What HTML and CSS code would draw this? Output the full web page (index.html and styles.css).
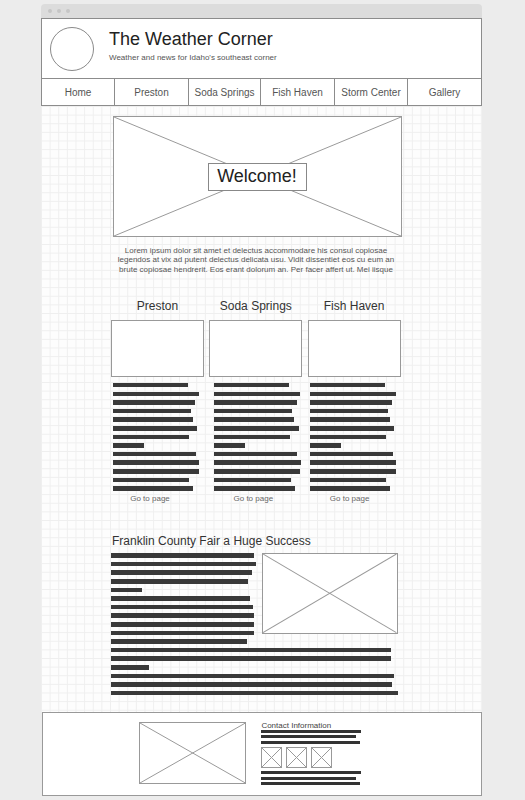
FILE: index.html
```html
<!DOCTYPE html>
<html lang="en">
<head>
<meta charset="utf-8">
<title>The Weather Corner</title>
<link rel="stylesheet" href="styles.css">
</head>
<body>
<div class="frame">
  <div class="titlebar"><span class="dot"></span><span class="dot"></span><span class="dot"></span></div>
  <header class="header">
    <div class="logo"></div>
    <div class="brand">
      <h1 class="title">The Weather Corner</h1>
      <p class="tagline">Weather and news for Idaho's southeast corner</p>
    </div>
  </header>
  <nav class="nav">
    <a href="#">Home</a>
    <a href="#">Preston</a>
    <a href="#">Soda Springs</a>
    <a href="#">Fish Haven</a>
    <a href="#">Storm Center</a>
    <a href="#">Gallery</a>
  </nav>
  <main class="canvas">
    <div class="hero">
      <svg class="hero-x" viewBox="0 0 100 100" preserveAspectRatio="none"><line x1="0" y1="0" x2="100" y2="100"/><line x1="100" y1="0" x2="0" y2="100"/></svg>
      <div class="welcome">Welcome!</div>
    </div>
    <p class="intro">Lorem ipsum dolor sit amet et delectus accommodare his consul copiosae<br>legendos at vix ad putent delectus delicata usu. Vidit dissentiet eos cu eum an<br>brute copiosae hendrerit. Eos erant dolorum an. Per facer affert ut. Mei iisque</p>

    <section class="cities">
      <div class="city">
        <h2 class="city-name">Preston</h2>
        <div class="city-box"></div>
        <div class="bars bars-c1">
          <div class="bar" style="width:75px"></div><div class="bar" style="width:86px"></div><div class="bar" style="width:82.5px"></div><div class="bar" style="width:78px"></div><div class="bar" style="width:80px"></div><div class="bar" style="width:84.5px"></div><div class="bar" style="width:76px"></div><div class="bar" style="width:31px"></div><div class="bar" style="width:83px"></div><div class="bar" style="width:86.3px"></div><div class="bar" style="width:86px"></div><div class="bar" style="width:76.5px"></div><div class="bar" style="width:80.5px"></div>
        </div>
        <a class="go go-c1" href="#">Go to page</a>
      </div>
      <div class="city">
        <h2 class="city-name">Soda Springs</h2>
        <div class="city-box"></div>
        <div class="bars bars-c2">
          <div class="bar" style="width:75px"></div><div class="bar" style="width:86px"></div><div class="bar" style="width:82.5px"></div><div class="bar" style="width:78px"></div><div class="bar" style="width:80px"></div><div class="bar" style="width:84.5px"></div><div class="bar" style="width:76px"></div><div class="bar" style="width:31px"></div><div class="bar" style="width:83px"></div><div class="bar" style="width:86.3px"></div><div class="bar" style="width:86px"></div><div class="bar" style="width:76.5px"></div><div class="bar" style="width:80.5px"></div>
        </div>
        <a class="go go-c2" href="#">Go to page</a>
      </div>
      <div class="city">
        <h2 class="city-name">Fish Haven</h2>
        <div class="city-box"></div>
        <div class="bars bars-c3">
          <div class="bar" style="width:75px"></div><div class="bar" style="width:86px"></div><div class="bar" style="width:82.5px"></div><div class="bar" style="width:78px"></div><div class="bar" style="width:80px"></div><div class="bar" style="width:84.5px"></div><div class="bar" style="width:76px"></div><div class="bar" style="width:31px"></div><div class="bar" style="width:83px"></div><div class="bar" style="width:86.3px"></div><div class="bar" style="width:86px"></div><div class="bar" style="width:76.5px"></div><div class="bar" style="width:80.5px"></div>
        </div>
        <a class="go go-c3" href="#">Go to page</a>
      </div>
    </section>

    <article class="article">
      <h2 class="article-title">Franklin County Fair a Huge Success</h2>
      <div class="article-top">
        <div class="bars article-left">
          <div class="bar" style="width:143px"></div><div class="bar" style="width:145px"></div><div class="bar" style="width:140.7px"></div><div class="bar" style="width:136.7px"></div><div class="bar" style="width:30.7px"></div><div class="bar" style="width:138.7px"></div><div class="bar" style="width:142.3px"></div><div class="bar" style="width:143px"></div><div class="bar" style="width:143.3px"></div><div class="bar" style="width:143px"></div><div class="bar" style="width:136.3px"></div>
        </div>
        <div class="ph article-img"><svg class="x" viewBox="0 0 100 100" preserveAspectRatio="none"><line x1="0" y1="0" x2="100" y2="100"/><line x1="100" y1="0" x2="0" y2="100"/></svg></div>
      </div>
      <div class="bars article-rest">
        <div class="bar" style="width:279.7px"></div><div class="bar" style="width:280.3px"></div><div class="bar" style="width:38.3px"></div><div class="bar" style="width:283px"></div><div class="bar" style="width:281.3px"></div><div class="bar" style="width:286.7px"></div>
      </div>
    </article>
  </main>
  <footer class="footer">
    <div class="ph footer-img"><svg class="x" viewBox="0 0 100 100" preserveAspectRatio="none"><line x1="0" y1="0" x2="100" y2="100"/><line x1="100" y1="0" x2="0" y2="100"/></svg></div>
    <div class="info">
      <div class="info-title">Contact Information</div>
      <div class="fbars">
        <div class="fbar" style="width:100px"></div><div class="fbar" style="width:95px"></div><div class="fbar" style="width:99px"></div>
      </div>
      <div class="icons">
        <div class="ph icon"><svg class="x" viewBox="0 0 100 100" preserveAspectRatio="none"><line x1="0" y1="0" x2="100" y2="100"/><line x1="100" y1="0" x2="0" y2="100"/></svg></div>
        <div class="ph icon"><svg class="x" viewBox="0 0 100 100" preserveAspectRatio="none"><line x1="0" y1="0" x2="100" y2="100"/><line x1="100" y1="0" x2="0" y2="100"/></svg></div>
        <div class="ph icon"><svg class="x" viewBox="0 0 100 100" preserveAspectRatio="none"><line x1="0" y1="0" x2="100" y2="100"/><line x1="100" y1="0" x2="0" y2="100"/></svg></div>
      </div>
      <div class="fbars fbars-bottom">
        <div class="fbar" style="width:100px"></div><div class="fbar" style="width:94.3px"></div><div class="fbar" style="width:99px"></div>
      </div>
    </div>
  </footer>
</div>
</body>
</html>
```
FILE: styles.css
```css
* { box-sizing: border-box; }
html, body { margin: 0; padding: 0; background: #ececec; }
body { font-family: "Liberation Sans", Arial, sans-serif; color: #333; }

.frame { width: 441px; margin-left: 41px; padding-top: 4px; }

.titlebar {
  height: 14px; background: #dcdcdc; border-radius: 4px 4px 0 0;
  display: flex; align-items: center; gap: 5px; padding-left: 7px;
}
.dot { width: 4px; height: 4px; border-radius: 50%; background: #c6c6c6; }

.header {
  height: 61px; background: #fff; border: 1px solid #8c8c8c;
  display: flex; align-items: flex-start; padding: 8px 0 0 8px;
}
.logo { width: 44px; height: 44px; border-radius: 50%; border: 1px solid #8a8a8a; flex: none; }
.brand { margin-left: 15px; padding-top: 1px; }
.title { margin: 0; font-size: 18px; line-height: 22px; font-weight: normal; color: #222; }
.tagline { margin: 3px 0 0; font-size: 8px; line-height: 10px; color: #555; }

.nav {
  display: grid; grid-template-columns: 72px 74px 72px 74px 73px 1fr;
  height: 27px; background: #fff; border: 1px solid #8c8c8c; border-top: none;
}
.nav a {
  display: flex; align-items: center; justify-content: center;
  font-size: 10px; color: #555; text-decoration: none; border-left: 1px solid #8c8c8c;
}
.nav a:first-child { border-left: none; }

.canvas {
  height: 606px; padding: 10px 0 0 70px;
  background-color: #fdfdfd;
  background-image: linear-gradient(#efefef 1px, transparent 1px), linear-gradient(90deg, #efefef 1px, transparent 1px);
  background-size: 8.63px 8.63px;
}

.hero {
  position: relative; width: 289px; height: 121px; margin-left: 1.5px;
  border: 1px solid #999; background: #fff;
  display: flex; align-items: center; justify-content: center;
}
.hero-x { position: absolute; left: 0; top: 0; width: 100%; height: 100%; }
.hero-x line, .x line { stroke: #9a9a9a; stroke-width: 1; vector-effect: non-scaling-stroke; }
.welcome {
  position: relative; width: 99px; height: 28px; border: 1px solid #888; background: #fff;
  display: flex; align-items: center; justify-content: center;
  font-size: 18px; color: #222;
}

.intro { width: 290px; margin: 9px 0 0; font-size: 8px; line-height: 9.3px; text-align: center; color: #555; }

.cities { display: grid; grid-template-columns: repeat(3, 93px); column-gap: 5.3px; margin-top: 25px; }
.city { display: flex; flex-direction: column; }
.city-name { margin: 0 0 7px; font-size: 12px; line-height: 14px; font-weight: normal; text-align: center; color: #333; }
.city-box { height: 57px; border: 1px solid #999; background: #fff; }

.bars { display: flex; flex-direction: column; gap: 4.03px; }
.bar { height: 4.6px; background: #393939; }
.bars-c1 { margin-top: 6px; padding-left: 1.7px; }
.bars-c2 { margin-top: 6px; padding-left: 5px; }
.bars-c3 { margin-top: 6px; padding-left: 2px; }

.go { display: block; margin-top: 3px; font-size: 8px; line-height: 10px; text-align: center; color: #666; text-decoration: none; }
.go-c1 { padding-right: 15px; }
.go-c2 { padding-right: 5px; }
.go-c3 { padding-right: 9px; }

.article { margin-top: 30.5px; width: 290px; }
.article-title { margin: 0 0 4.8px; padding-left: 1px; font-size: 12px; line-height: 14px; font-weight: normal; color: #333; }
.article-top { display: flex; align-items: flex-start; }
.article-left { width: 151.3px; flex: none; }
.ph { border: 1px solid #999; background: #fff; }
.ph .x { display: block; width: 100%; height: 100%; }
.article-img { width: 135.4px; height: 80.6px; }
.article-rest { margin-top: 4.03px; }

.footer {
  width: 440px; height: 84px; margin-left: 1px;
  border: 1px solid #999; background: #fff;
  display: flex; align-items: flex-start; gap: 15px; padding: 7.5px 0 0 96px;
}
.footer-img { width: 107.4px; height: 62px; margin-top: 1.5px; flex: none; }
.info { width: 123px; }
.info-title { font-size: 8px; line-height: 9px; color: #444; }
.fbars { display: flex; flex-direction: column; gap: 2.3px; margin-top: 0.7px; }
.fbar { height: 3px; background: #333; }
.icons { display: flex; gap: 4px; margin-top: 3.2px; }
.icon { width: 21px; height: 21px; }
.fbars-bottom { margin-top: 3.5px; }
```
